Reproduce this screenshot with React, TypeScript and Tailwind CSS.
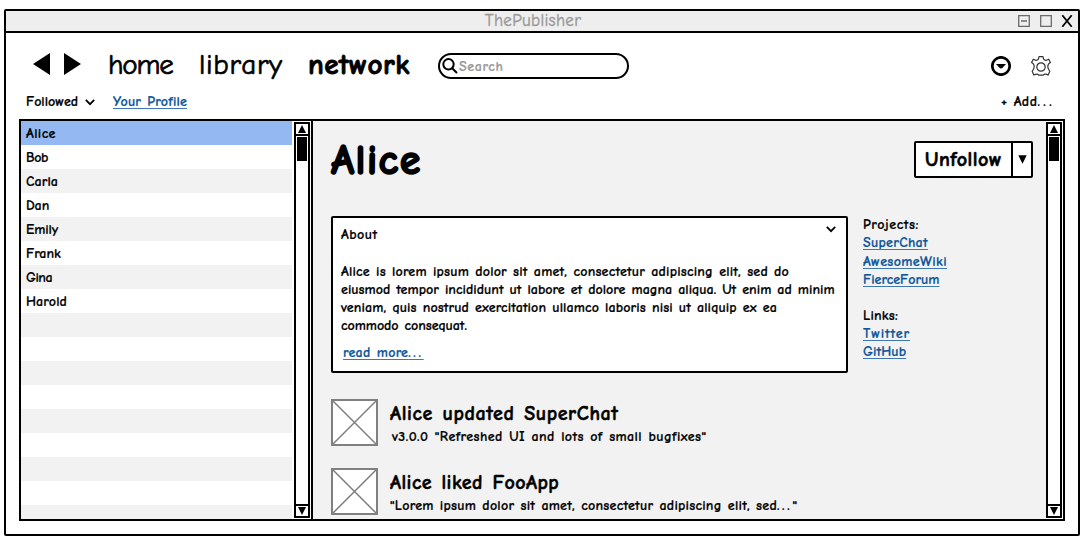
import type { ReactNode } from "react";

function ScrollBar() {
  return (
    <div className="flex w-4 shrink-0 flex-col border-2 border-black bg-white">
      <div className="flex h-3 shrink-0 items-center justify-center border-b-2 border-black">
        <svg width="8" height="8" viewBox="0 0 8 8"><path d="M4 0 8 8H0z" /></svg>
      </div>
      <div className="mx-px mt-px h-6 bg-black" />
      <div className="grow" />
      <div className="flex h-3 shrink-0 items-center justify-center border-t-2 border-black">
        <svg width="8" height="8" viewBox="0 0 8 8"><path d="M0 0H8L4 8z" /></svg>
      </div>
    </div>
  );
}

function Chevron() {
  return (
    <svg width="10" height="7" viewBox="0 0 10 7" fill="none" stroke="black" strokeWidth="1.8">
      <path d="M.8 .8 5 5.2 9.2 .8" />
    </svg>
  );
}

function Dots() {
  return <span className="tracking-[2.6px]">...</span>;
}

function Link({ className = "", children }: { className?: string; children: ReactNode }) {
  return (
    <a href="#" className={`text-[#0c5699] underline decoration-[#3d78ae] decoration-1 underline-offset-2 [text-decoration-skip-ink:none] ${className}`}>
      {children}
    </a>
  );
}

function Placeholder() {
  return (
    <svg className="shrink-0" width="47" height="47" viewBox="0 0 47 47" fill="white" stroke="#808080" strokeWidth="2">
      <rect x="1" y="1" width="45" height="45" />
      <path d="M2 2 45 45M45 2 2 45" strokeWidth="1.5" />
    </svg>
  );
}

const people: [string, string][] = [
  ["Alice", "tracking-[0.4px]"],
  ["Bob", "tracking-[-0.4px]"],
  ["Carla", "tracking-[0.1px]"],
  ["Dan", "tracking-[-0.1px]"],
  ["Emily", "tracking-[-0.1px]"],
  ["Frank", "tracking-normal"],
  ["Gina", "tracking-[-0.5px]"],
  ["Harold", "tracking-[0.1px]"],
];

export default function App() {
  return (
    <div className="h-[540px] w-[1084px] bg-white pt-[9px] pl-1 font-['Comic_Neue','Inter',sans-serif] text-[14px] leading-[18px] font-bold whitespace-nowrap text-black [-webkit-text-stroke:0.2px_currentColor] [font-feature-settings:'cv11'] [word-spacing:1px]">
      <div className="flex h-[527px] w-[1076px] flex-col rounded-[2px] border-2 border-black bg-white">
        <div className="grid h-[22px] shrink-0 grid-cols-[1fr_auto_1fr] items-center border-b-2 border-black bg-[#eeeeee]">
          <span />
          <h1 className="pr-[18px] text-[17px] leading-5 font-normal tracking-[0.3px] text-[#999999] [-webkit-text-stroke:0.4px_currentColor]">ThePublisher</h1>
          <div className="flex justify-end gap-[9px] pr-[5px]">
            <svg width="12" height="12" viewBox="0 0 12 12" fill="none" stroke="#6b6b6b" strokeWidth="1.3">
              <path d="M.7.7H11.3V11.3H.7zM3 6H9" />
            </svg>
            <svg className="ml-px" width="12" height="12" viewBox="0 0 12 12" fill="none" stroke="#6b6b6b" strokeWidth="1.3">
              <path d="M.7.7H11.3V11.3H.7z" />
            </svg>
            <svg width="12" height="12" viewBox="0 0 12 12" fill="none" stroke="black" strokeWidth="1.7">
              <path d="M1.3.2 10.7 11.8M10.7.2 1.3 11.8" />
            </svg>
          </div>
        </div>

        <div className="flex h-[59px] shrink-0 items-start pl-[27px]">
          <svg className="mt-5" width="48" height="22" viewBox="0 0 48 22">
            <path d="M17 0V22L0 11zM31 0V22L48 11z" />
          </svg>
          <nav className="mt-4 ml-[27px] flex text-[29px] leading-8 font-normal [-webkit-text-stroke:0.7px_currentColor]">
            <span className="w-[91px] tracking-[-1.2px]">home</span>
            <span className="w-[109px] tracking-[0.7px]">library</span>
            <span className="w-[131px] font-bold tracking-[0.5px] [-webkit-text-stroke:0.9px_currentColor]">network</span>
          </nav>
          <div className="mt-5 -ml-px flex h-[26px] w-[191px] items-center rounded-full border-2 border-black pl-0.5">
            <svg width="16" height="16" viewBox="0 0 16 16" fill="none" stroke="black" strokeWidth="2">
              <circle cx="6.5" cy="6.3" r="5.2" />
              <path d="M10.2 10.2 15 15" />
            </svg>
            <span className="ml-px pt-px tracking-[0.6px] text-[#999999]">Search</span>
          </div>
          <div className="mt-[23px] mr-[27px] ml-auto flex gap-5">
            <svg width="20" height="20" viewBox="0 0 20 20">
              <circle cx="10" cy="10" r="8.7" fill="none" stroke="black" strokeWidth="2.7" />
              <path d="M5 8H15L12 11.2 10 12.8 8 11.2z" />
            </svg>
            <svg width="20" height="20" viewBox="0 0 20 20" fill="none" stroke="#333" strokeWidth="1.2" strokeLinejoin="round">
              <circle cx="10" cy="11" r="4.2" />
              <path d="M8 .7H12L12.6 3.2Q14 4.8 15.4 4.2L17.7 3.2 19.4 6.6 17.7 7.8Q16.6 9 16.9 11 17.1 13 17.9 13.8L18.8 15.2 17.2 18.9 14.6 18.2Q13.4 17.8 12.3 19.2H7.7Q6.6 17.8 5.4 18.2L2.8 18.9 1.2 15.2 2.1 13.8Q2.9 13 3.1 11 3.4 9 2.3 7.8L.6 6.6 2.3 3.2 4.6 4.2Q6 4.8 7.4 3.2z" />
            </svg>
          </div>
        </div>

        <div className="flex h-[27px] shrink-0 items-start pt-px pr-[23px] pl-5">
          <button className="flex w-[87px] items-center gap-[6px]">
            <span className="w-[53px] text-left">Followed</span>
            <Chevron />
          </button>
          <Link className="tracking-[0.18px]">Your Profile</Link>
          <button className="ml-auto flex gap-1.5 tracking-[0.5px]">
            <span>+</span>
            <span>Add<span className="tracking-[3.3px]">...</span></span>
          </button>
        </div>

        <main className="ml-[13px] flex h-[402px] w-[1046px] shrink-0 border-2 border-black">
          <aside className="flex w-[292px] shrink-0 border-r-2 border-black pr-px">
            <ul className="mr-0.5 h-[398px] grow overflow-hidden">
              {Array.from({ length: 17 }, (_, i) => (
                <li key={i} className={`h-6 pt-px pl-[5px] leading-6 ${i === 0 ? "bg-[#94b9f2]" : i % 2 === 0 ? "bg-[#f2f2f2]" : "bg-white"}`}>
                  {people[i] && <span className={people[i][1]}>{people[i][0]}</span>}
                </li>
              ))}
            </ul>
            <div className="flex py-px"><ScrollBar /></div>
          </aside>

          <section className="h-[398px] grow overflow-hidden bg-[#f2f2f2] pr-[13px] pl-[18px]">
            <header className="flex h-[95px] justify-between">
              <h2 className="mt-4 text-[42px] leading-[48px] font-bold tracking-[1.4px] [-webkit-text-stroke:1.6px_currentColor]">Alice</h2>
              <div className="mt-5 flex h-[37px] w-[119px] rounded-[2px] border-2 border-black bg-white">
                <button className="grow border-r-2 border-black pt-px pl-[9px] text-left text-[20px] font-bold tracking-[0.5px] [-webkit-text-stroke:0.6px_currentColor]">Unfollow</button>
                <button className="flex w-[18px] items-center justify-center">
                  <svg width="9" height="9" viewBox="0 0 9 9"><path d="M.3.3H8.7L4.5 8.7z" /></svg>
                </button>
              </div>
            </header>

            <div className="flex">
              <article className="h-[157px] w-[517px] rounded-[2px] border-2 border-black bg-white pt-2 pl-2">
                <div className="flex h-[37px] justify-between pr-[10px]">
                  <h3 className="tracking-[0.5px]">About</h3>
                  <Chevron />
                </div>
                <p className="flex flex-col">
                  <span className="tracking-[0.2px]">Alice is lorem ipsum dolor sit amet, consectetur adipiscing elit, sed do</span>
                  <span className="tracking-[0.02px]">eiusmod tempor incididunt ut labore et dolore magna aliqua. Ut enim ad minim</span>
                  <span className="tracking-[0.11px]">veniam, quis nostrud exercitation ullamco laboris nisi ut aliquip ex ea</span>
                  <span className="tracking-[-0.05px]">commodo consequat.</span>
                </p>
                <div className="mt-[9px] pl-0.5"><Link className="tracking-[0.25px]">read more<Dots /></Link></div>
              </article>
              <div className="ml-[15px] flex flex-col items-start">
                <h4 className="tracking-[0.55px]">Projects:</h4>
                <Link className="tracking-[0.3px]">SuperChat</Link>
                <Link className="mt-px tracking-[0.36px]">AwesomeWiki</Link>
                <Link>FierceForum</Link>
                <h4 className="mt-[18px] tracking-[0.2px]">Links:</h4>
                <Link className="tracking-[0.88px]">Twitter</Link>
                <Link className="tracking-[0.1px]">GitHub</Link>
              </div>
            </div>

            <div className="mt-[26px] flex flex-col gap-[22px]">
              <div className="flex gap-3">
                <Placeholder />
                <div className="mt-[3px]">
                  <h3 className="text-[20px] leading-6 font-bold tracking-[0.6px] [-webkit-text-stroke:0.5px_currentColor] [word-spacing:2px]">Alice updated SuperChat</h3>
                  <p className="mt-0.5 pl-0.5 tracking-[0.42px]">v3.0.0 "Refreshed UI and lots of small bugfixes"</p>
                </div>
              </div>
              <div className="flex gap-3">
                <Placeholder />
                <div className="mt-[3px]">
                  <h3 className="text-[20px] leading-6 font-bold tracking-[0.42px] [-webkit-text-stroke:0.5px_currentColor] [word-spacing:2px]">Alice liked FooApp</h3>
                  <p className="mt-0.5 tracking-[0.24px]">"Lorem ipsum dolor sit amet, consectetur adipiscing elit, sed<Dots />"</p>
                </div>
              </div>
            </div>
          </section>
          <div className="flex bg-white py-px pr-px"><ScrollBar /></div>
        </main>
      </div>
    </div>
  );
}
